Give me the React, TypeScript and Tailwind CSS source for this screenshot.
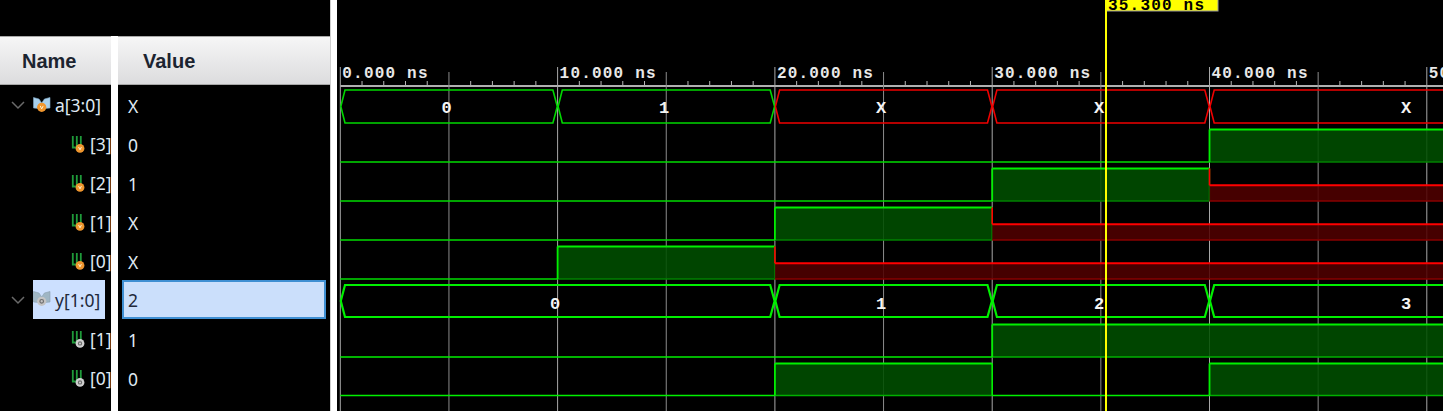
const X0 = 340.3;
const STEP = 108.65;
const px = (ns: number) => X0 + (ns / 5) * STEP;
const OX = 337;
const sx = (x: number) => x - OX;

type Row = { name: string; value: string; kind: "bus" | "bit"; out?: boolean; selected?: boolean };
const rows: Row[] = [
  { name: "a[3:0]", value: "X", kind: "bus" },
  { name: "[3]", value: "0", kind: "bit" },
  { name: "[2]", value: "1", kind: "bit" },
  { name: "[1]", value: "X", kind: "bit" },
  { name: "[0]", value: "X", kind: "bit" },
  { name: "y[1:0]", value: "2", kind: "bus", out: true, selected: true },
  { name: "[1]", value: "1", kind: "bit", out: true },
  { name: "[0]", value: "0", kind: "bit", out: true },
];

function Chevron() {
  return (
    <svg width="14" height="10" viewBox="0 0 14 10" className="shrink-0 -mt-[3px]">
      <path d="M1 2 L7 8 L13 2" fill="none" stroke="#6a6a6a" strokeWidth="1.5" />
    </svg>
  );
}

function BusIcon({ out }: { out?: boolean }) {
  return (
    <svg width="18" height="17" viewBox="0 0 18 17" className="shrink-0 -mt-[3px]">
      <path d="M0.5 0.5 L6 2 L8.7 6 L11.4 2 L17 0.5 L17 11 L12 11.5 L5.5 11.5 L0.5 11 Z" fill={out ? "#9fb6c4" : "#a8d0ec"} stroke={out ? "#8aa0ae" : "#7fa8c8"} strokeWidth="0.6" />
      <circle cx="8.7" cy="10.3" r="4.6" fill={out ? "#c4c4c4" : "#f0962e"} />
      {out ? <circle cx="8.7" cy="10.3" r="1.8" fill="none" stroke="#6e6e6e" strokeWidth="1.2" /> : <path d="M7.2 8.9 L8.7 11.9 L10.2 8.9" fill="none" stroke="#fff1d0" strokeWidth="1" />}
    </svg>
  );
}

function BitIcon({ out }: { out?: boolean }) {
  return (
    <svg width="15" height="18" viewBox="0 0 15 18" className="shrink-0 -mt-[2px]">
      <path d="M1.8 0 L1.8 11.5 L5.8 11.5 L5.8 0 M9.8 0 L9.8 9" fill="none" stroke="#1f9a3a" strokeWidth="1.8" />
      <circle cx="9" cy="12.4" r="4.4" fill={out ? "#cfcfcf" : "#f0962e"} />
      {out ? <circle cx="9" cy="12.4" r="1.6" fill="none" stroke="#6e6e6e" strokeWidth="1.2" /> : <path d="M7.6 11.1 L9 13.8 L10.4 11.1" fill="none" stroke="#fff1d0" strokeWidth="1" />}
    </svg>
  );
}

function NameRow({ row }: { row: Row }) {
  if (row.kind === "bus") {
    return (
      <div className="h-[39px] flex items-center pl-[11px]">
        <Chevron />
        <div className={`ml-[8px] w-[72px] flex items-center ${row.selected ? "self-start -mt-[2px] h-[39px] pt-[3px] bg-[#cce0ff] text-[#22283a]" : "h-[39px] text-[#dfe8f2]"}`}>
          <BusIcon out={row.out} />
          <span className="ml-[4px] -mt-[1px] whitespace-nowrap">{row.name}</span>
        </div>
      </div>
    );
  }
  return (
    <div className="h-[39px] flex items-center pl-[71px] text-[#dfe8f2]">
      <BitIcon out={row.out} />
      <span className="ml-[4px] -mt-[1px] whitespace-nowrap">{row.name}</span>
    </div>
  );
}

function ValueRow({ row }: { row: Row }) {
  if (row.selected) {
    return (
      <div className="h-[39px] pl-[4px] pr-[4px] flex items-start">
        <div className="-mt-[2px] w-full h-[39px] pt-[3px] border-2 border-[#3f8fd2] bg-[#cbdffb] text-[#22283a] flex items-center pl-[4px]">{row.value}</div>
      </div>
    );
  }
  return <div className="h-[39px] flex items-center pl-[10px] text-[#dfe8f2]">{row.value}</div>;
}

function Header({ label, pad }: { label: string; pad: string }) {
  return (
    <div className={`h-[49px] ${pad} flex items-center bg-gradient-to-b from-[#f6f6f6] to-[#dcdcde] border-t border-b border-[#a8a8a8] font-bold text-[20px] text-[#1c2430] font-['Liberation_Sans',sans-serif]`}>
      {label}
    </div>
  );
}

const BRIGHT = "#00f000";
const BIT = "#00dc00";
const DARK_G = "#008000";
const RED = "#ff0000";
const DARK_R = "#880000";
const FILL_G = "rgba(0,78,0,0.88)";
const FILL_R = "rgba(80,0,0,0.88)";
const RIGHT = 1443;

type Seg = { from: number; to: number; v: "0" | "1" | "X" };

function Bit({ top, bottom, segs, bright }: { top: number; bottom: number; segs: Seg[]; bright?: boolean }) {
  const mid = top + (bottom - top) / 2 + 0.5;
  const low = bright ? "#00f000" : BIT;
  return (
    <g>
      {segs.map((s, i) => {
        const a = sx(s.from);
        const b = sx(s.to);
        if (s.v === "0") return <line key={i} x1={a} x2={b} y1={bottom} y2={bottom} stroke={low} strokeWidth="1.6" />;
        if (s.v === "1")
          return (
            <g key={i}>
              <rect x={a} y={top} width={b - a} height={bottom - top} fill={FILL_G} />
              <line x1={a} x2={b} y1={bottom} y2={bottom} stroke={bright ? "#00b000" : DARK_G} strokeWidth="1.4" />
              <line x1={a} x2={b} y1={top} y2={top} stroke={BRIGHT} strokeWidth="2" />
              <line x1={a} x2={a} y1={top} y2={bottom} stroke={BRIGHT} strokeWidth="1.8" />
              {i < segs.length - 1 && <line x1={b} x2={b} y1={top} y2={bottom} stroke={segs[i + 1].v === "X" ? DARK_G : BRIGHT} strokeWidth="1.6" />}
            </g>
          );
        return (
          <g key={i}>
            <rect x={a} y={mid} width={b - a} height={bottom - mid} fill={FILL_R} />
            <line x1={a} x2={b} y1={bottom} y2={bottom} stroke={DARK_R} strokeWidth="1.4" />
            <line x1={a} x2={b} y1={mid} y2={mid} stroke={RED} strokeWidth="2" />
            <line x1={a} x2={a} y1={top} y2={mid} stroke={RED} strokeWidth="1.6" />
          </g>
        );
      })}
    </g>
  );
}

function Bus({ top, bottom, edges, w }: { top: number; bottom: number; edges: [number, number, string][]; w: number }) {
  const m = (top + bottom) / 2;
  return (
    <g>
      {edges.map(([a, b, c], i) => {
        const l = sx(a);
        const r = sx(b);
        const open = b >= RIGHT;
        const d = open
          ? `M${r} ${top} L${l + 4.7} ${top} L${l + 0.5} ${m} L${l + 4.7} ${bottom} L${r} ${bottom}`
          : `M${l + 4.7} ${top} L${r - 4.7} ${top} L${r - 0.3} ${m} L${r - 4.7} ${bottom} L${l + 4.7} ${bottom} L${l + 0.5} ${m} Z`;
        return <path key={i} d={d} fill="none" stroke={c} strokeWidth={w} />;
      })}
    </g>
  );
}

const labelFont = "font-['Liberation_Mono',monospace] font-bold";

function Waves() {
  const ticks: number[] = [];
  for (let i = 0; i < 52; i++) ticks.push(X0 + i * (STEP / 5));
  const a10 = px(10), a20 = px(20), a30 = px(30), a40 = px(40);
  return (
    <svg width={RIGHT - OX} height={411} viewBox={`0 0 ${RIGHT - OX} 411`} className="block shrink-0">
      <line x1={sx(X0)} x2={RIGHT - OX} y1={86} y2={86} stroke="#b0b0b0" strokeWidth="2" />
      {ticks.map((t, i) => {
        const major = i % 10 === 0;
        const mid = i % 5 === 0;
        return (
          <line key={i} x1={sx(t)} x2={sx(t)} y1={major ? 67 : mid ? 72 : 81} y2={major || mid ? 411 : 85} stroke={major ? "#a8a8a8" : mid ? "#8c8c8c" : "#b8b8b8"} strokeWidth={1} />
        );
      })}
      {[0, 10, 20, 30, 40, 50].map((n) => (
        <text key={n} x={sx(px(n)) + 2} y={77.5} fill="#e8e8e8" fontSize="16" letterSpacing="1.2" className={labelFont}>
          {n === 50 ? "50" : `${n}.000 ns`}
        </text>
      ))}

      <Bus top={90} bottom={123} w={1.6} edges={[[X0, a10, "#00d800"], [a10, a20, "#00d800"], [a20, a30, "#f00000"], [a30, a40, "#f00000"], [a40, RIGHT, "#f00000"]]} />
      <Bit top={129.5} bottom={162} segs={[{ from: X0, to: a40, v: "0" }, { from: a40, to: RIGHT, v: "1" }]} />
      <Bit top={168.5} bottom={201} segs={[{ from: X0, to: a30, v: "0" }, { from: a30, to: a40, v: "1" }, { from: a40, to: RIGHT, v: "X" }]} />
      <Bit top={207.5} bottom={240} segs={[{ from: X0, to: a20, v: "0" }, { from: a20, to: a30, v: "1" }, { from: a30, to: RIGHT, v: "X" }]} />
      <Bit top={246.5} bottom={279} segs={[{ from: X0, to: a10, v: "0" }, { from: a10, to: a20, v: "1" }, { from: a20, to: RIGHT, v: "X" }]} />
      <Bus top={285} bottom={317} w={2.2} edges={[[X0, a20, BRIGHT], [a20, a30, BRIGHT], [a30, a40, BRIGHT], [a40, RIGHT, BRIGHT]]} />
      <Bit bright top={324.5} bottom={357} segs={[{ from: X0, to: a30, v: "0" }, { from: a30, to: RIGHT, v: "1" }]} />
      <Bit bright top={363.5} bottom={395.5} segs={[{ from: X0, to: a20, v: "0" }, { from: a20, to: a30, v: "1" }, { from: a30, to: a40, v: "0" }, { from: a40, to: RIGHT, v: "1" }]} />

      {[[446.7, "0"], [664, "1"], [881, "X"], [1099, "X"], [1406, "X"]].map(([x, t], i) => (
        <text key={i} x={sx(x as number)} y={112.5} textAnchor="middle" fill="#f4f4f4" fontSize="17" className={labelFont}>{t as string}</text>
      ))}
      {[[555, "0"], [881, "1"], [1099, "2"], [1406, "3"]].map(([x, t], i) => (
        <text key={i} x={sx(x as number)} y={308.5} textAnchor="middle" fill="#f4f4f4" fontSize="17" className={labelFont}>{t as string}</text>
      ))}

      <rect x={sx(1106)} y={-1} width={112} height={12} fill="#ffff00" stroke="#9a9a9a" strokeWidth="1" />
      <text x={sx(1108)} y={10} fill="#000" fontSize="16" letterSpacing="1.2" className={labelFont}>35.300 ns</text>
      <line x1={sx(1106)} x2={sx(1106)} y1={0} y2={411} stroke="#ffff00" strokeWidth="2" />
    </svg>
  );
}

export default function App() {
  return (
    <div className="w-[1443px] h-[411px] bg-black overflow-hidden flex text-[17.5px] leading-none font-['Noto_Sans','Open_Sans',sans-serif]">
      <div className="w-[111px] shrink-0 pt-[36px]">
        <Header label="Name" pad="pl-[22px]" />
        <div className="pt-[2px]">
          {rows.map((r, i) => (
            <NameRow key={i} row={r} />
          ))}
        </div>
      </div>
      <div className="w-[7px] shrink-0 mt-[36px] bg-white" />
      <div className="w-[212px] shrink-0 pt-[36px]">
        <Header label="Value" pad="pl-[25px]" />
        <div className="pt-[2px]">
          {rows.map((r, i) => (
            <ValueRow key={i} row={r} />
          ))}
        </div>
      </div>
      <div className="w-[7px] shrink-0 bg-white border-l border-[#cfcfcf]" />
      <Waves />
    </div>
  );
}
